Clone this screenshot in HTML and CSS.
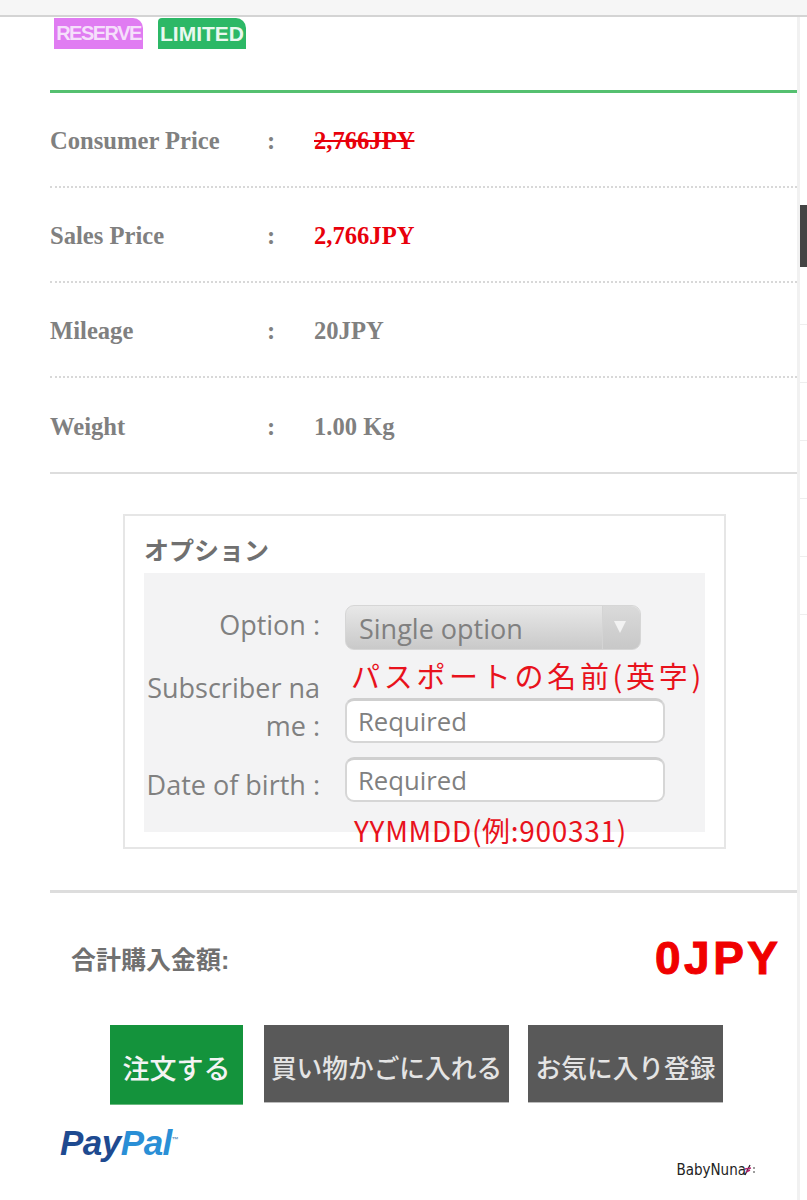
FILE: index.html
```html
<!DOCTYPE html>
<html lang="ja">
<head>
  <meta charset="UTF-8">
  <title>Product detail</title>
  <link rel="stylesheet" href="styles.css">
</head>
<body>
  <div class="topbar"></div>

  <div class="layout">
    <div class="main">
      <div class="badges">
        <span class="badge badge-reserve">RESERVE</span>
        <span class="badge badge-limited">LIMITED</span>
      </div>

      <div class="info">
        <div class="info-row">
          <span class="info-label">Consumer Price</span>
          <span class="info-colon">:</span>
          <span class="info-value price-old">2,766JPY</span>
        </div>
        <div class="info-row">
          <span class="info-label">Sales Price</span>
          <span class="info-colon">:</span>
          <span class="info-value price">2,766JPY</span>
        </div>
        <div class="info-row">
          <span class="info-label">Mileage</span>
          <span class="info-colon">:</span>
          <span class="info-value">20JPY</span>
        </div>
        <div class="info-row info-row-last">
          <span class="info-label">Weight</span>
          <span class="info-colon">:</span>
          <span class="info-value">1.00 Kg</span>
        </div>
      </div>

      <div class="options">
        <h2 class="options-title">オプション</h2>
        <div class="options-panel">
          <div class="field field-option">
            <label class="field-label">Option :</label>
            <div class="select">
              <span class="select-text">Single option</span>
              <span class="select-arrow"></span>
            </div>
          </div>
          <div class="field field-name">
            <label class="field-label">Subscriber name :</label>
            <input class="input" type="text" placeholder="Required">
          </div>
          <div class="field field-date">
            <label class="field-label">Date of birth :</label>
            <input class="input" type="text" placeholder="Required">
          </div>
          <!-- hand written notes on top of the form -->
          <span class="note note-name">パスポートの名前(英字)</span>
          <span class="note note-date">YYMMDD(例:900331)</span>
        </div>
      </div>

      <div class="total">
        <span class="total-label">合計購入金額:</span>
        <span class="total-value">0JPY</span>
      </div>

      <div class="buttons">
        <button class="btn btn-order" type="button">注文する</button>
        <button class="btn btn-cart" type="button">買い物かごに入れる</button>
        <button class="btn btn-fav" type="button">お気に入り登録</button>
      </div>

      <div class="footer">
        <div class="paypal"><span class="paypal-pay">Pay</span><span class="paypal-pal">Pal</span><span class="paypal-tm">™</span></div>
        <div class="signature">
          <span>BabyNuna</span>
          <svg class="signature-mark" width="12" height="14" viewBox="0 0 12 14">
            <path d="M1 12 L6 2" stroke="#222" stroke-width="1.2" fill="none"/>
            <path d="M1 6 L7 5 M2 9 L6 7" stroke="#b0246c" stroke-width="1.6" fill="none"/>
            <circle cx="10" cy="5" r="0.8" fill="#222"/>
            <circle cx="10" cy="9" r="0.8" fill="#222"/>
          </svg>
        </div>
      </div>
    </div>

    <div class="side">
      <div class="side-cell side-cell-first"></div>
      <div class="side-active"></div>
      <div class="side-cell"></div>
      <div class="side-cell"></div>
      <div class="side-cell"></div>
      <div class="side-cell"></div>
      <div class="side-cell"></div>
      <div class="side-cell"></div>
    </div>
  </div>
</body>
</html>
```

FILE: styles.css
```css
body {
  margin: 0;
  background: #fff;
  font-family: "Liberation Sans", "Noto Sans CJK JP", sans-serif;
  color: #808080;
}

.topbar {
  height: 15px;
  background: #f6f6f6;
  border-bottom: 2px solid #d4d4d4;
}

.layout {
  display: flex;
}

.main {
  width: 747px;
  padding-left: 50px;
}

/* right strip */
.side {
  width: 7px;
  border-left: 3px solid #f1f1f1;
}
.side-cell {
  height: 57px;
  border-bottom: 1px solid #eee;
}
.side-cell-first {
  height: 188px;
  border-bottom: 0;
}
.side-active {
  height: 62px;
  background: #444;
}

/* badges */
.badges {
  display: flex;
  gap: 15px;
  margin: 1px 0 41px 4px;
}
.badge {
  width: 88px;
  height: 31px;
  line-height: 31px;
  text-align: center;
  color: #fff;
  font-size: 21px;
  font-weight: bold;
  border-top-right-radius: 10px;
}
.badge-reserve {
  width: 89px;
  background: #e07cf2;
  color: #f5dffb;
  font-size: 20px;
  letter-spacing: -1.5px;
}
.badge-limited {
  background: #2cb866;
  color: #e9f8ef;
  border-top-left-radius: 4px;
}

/* price table */
.info {
  border-top: 3px solid #55c070;
}
.info-row {
  display: flex;
  align-items: center;
  height: 90px;
  padding-top: 3px;
  border-bottom: 2px dotted #d8d8d8;
  font-family: "Liberation Serif", "Noto Sans CJK JP", serif;
  font-size: 24.6px;
  font-weight: bold;
}
.info-row-last {
  border-bottom: 2px solid #ddd;
  height: 91px;
}
.info-label {
  width: 217px;
}
.info-colon {
  width: 47px;
}
.price {
  color: #e8000b;
}
.price-old {
  color: #e8000b;
  text-decoration: line-through;
}

/* option box */
.options {
  width: 561px;
  height: 331px;
  margin: 40px 0 0 73px;
  padding: 0 19px;
  border: 2px solid #e6e6e6;
}
.options-title {
  margin: 0;
  height: 57px;
  line-height: 70px;
  font-size: 25px;
  font-weight: bold;
  color: #707070;
}
.options-panel {
  position: relative;
  height: 227px;
  padding-top: 32px;
  background: #f3f3f4;
  font-family: "Open Sans", "Noto Sans CJK JP", sans-serif;
  font-size: 27px;
}
.field {
  display: flex;
  align-items: flex-end;
  gap: 25px;
}
.field-name {
  margin-top: 19px;
}
.field-date {
  margin-top: 12px;
}
.field-label {
  width: 176px;
  flex-shrink: 0;
  text-align: right;
  line-height: 38px;
  word-break: break-all;
}
.field-date .field-label {
  margin-bottom: -2px;
  white-space: nowrap;
}
.field-option .field-label {
  margin-bottom: 6px;
}
.field-name .input {
  margin-bottom: 2px;
}

.select {
  display: flex;
  width: 296px;
  height: 45px;
  border-radius: 9px;
  background: linear-gradient(#e8e8e8, #c9c9c9);
  box-sizing: border-box;
  border: 1px solid #d6d6d6;
  color: #808080;
}
.select-text {
  flex: 1;
  padding-left: 13px;
  line-height: 45px;
}
.select-arrow {
  width: 37px;
  border-left: 1px solid #d4d4d4;
  background: linear-gradient(#dadada, #c8c8c8);
  border-radius: 0 9px 9px 0;
  position: relative;
}
.select-arrow::after {
  content: "";
  position: absolute;
  top: 15px;
  left: 11px;
  border-left: 6px solid transparent;
  border-right: 6px solid transparent;
  border-top: 12px solid #f2f2f2;
}

.input {
  width: 320px;
  height: 45px;
  box-sizing: border-box;
  padding: 1px 11px 0;
  border: 2px solid #d6d6d6;
  border-top: 3px solid #cfcfcf;
  border-radius: 9px;
  background: #fff;
  font-family: inherit;
  font-size: 25.7px;
  color: #808080;
  outline: none;
}
.input::placeholder {
  color: #808080;
  opacity: 1;
}

/* notes written over the form */
.note {
  position: absolute;
  color: #e8121c;
  font-family: "Noto Sans CJK JP", sans-serif;
  font-weight: 400;
  white-space: nowrap;
}
.note-name {
  left: 207px;
  top: 82px;
  font-size: 29px;
  letter-spacing: 3.7px;
  line-height: 40px;
}
.note-date {
  left: 210px;
  top: 237px;
  font-size: 28px;
  line-height: 40px;
  letter-spacing: 0.7px;
}

/* total */
.total {
  display: flex;
  justify-content: space-between;
  align-items: center;
  height: 135px;
  margin-top: 41px;
  padding: 0 19px 2px 21px;
  border-top: 3px solid #ddd;
  box-sizing: border-box;
}
.total-label {
  font-size: 25px;
  font-weight: bold;
  color: #707070;
}
.total-value {
  font-size: 46px;
  font-weight: bold;
  letter-spacing: 3.5px;
  margin-right: -3.5px;
  color: #f00000;
  -webkit-text-stroke: 1px #f00000;
}

/* buttons */
.buttons {
  display: flex;
  align-items: flex-start;
  margin: 0 0 0 60px;
}
.btn {
  height: 78px;
  padding: 6px 0 0;
  border: 0;
  border-bottom: 1px solid #bbb;
  background: #595959;
  color: #e4e4e4;
  font-family: "Noto Sans CJK JP", sans-serif;
  font-size: 25.7px;
  font-weight: 500;
  white-space: nowrap;
}
.btn-order {
  width: 133px;
  height: 80px;
  background: #14933c;
  color: #f4f4f4;
  font-size: 27px;
  border-bottom-color: #69b97f;
}
.btn-cart {
  width: 245px;
  margin-left: 21px;
}
.btn-fav {
  width: 195px;
  margin-left: 19px;
}

/* footer */
.footer {
  display: flex;
  justify-content: space-between;
  height: 95px;
  margin-left: 10px;
  padding-right: 41px;
}
.paypal {
  margin-top: 15px;
  font-size: 35px;
  font-weight: bold;
  font-style: italic;
  line-height: 40px;
  letter-spacing: -0.5px;
}
.paypal-pay {
  color: #1e4a90;
}
.paypal-pal {
  color: #2a8fd6;
}
.paypal-tm {
  font-size: 7px;
  vertical-align: super;
  color: #5b8fc0;
  font-style: normal;
}
.signature {
  display: flex;
  align-items: center;
  margin-top: 55px;
  height: 20px;
  font-family: "DejaVu Sans Condensed", "DejaVu Sans", sans-serif;
  font-size: 15px;
  color: #222;
}
.signature-mark {
  margin-left: -2px;
}
```
